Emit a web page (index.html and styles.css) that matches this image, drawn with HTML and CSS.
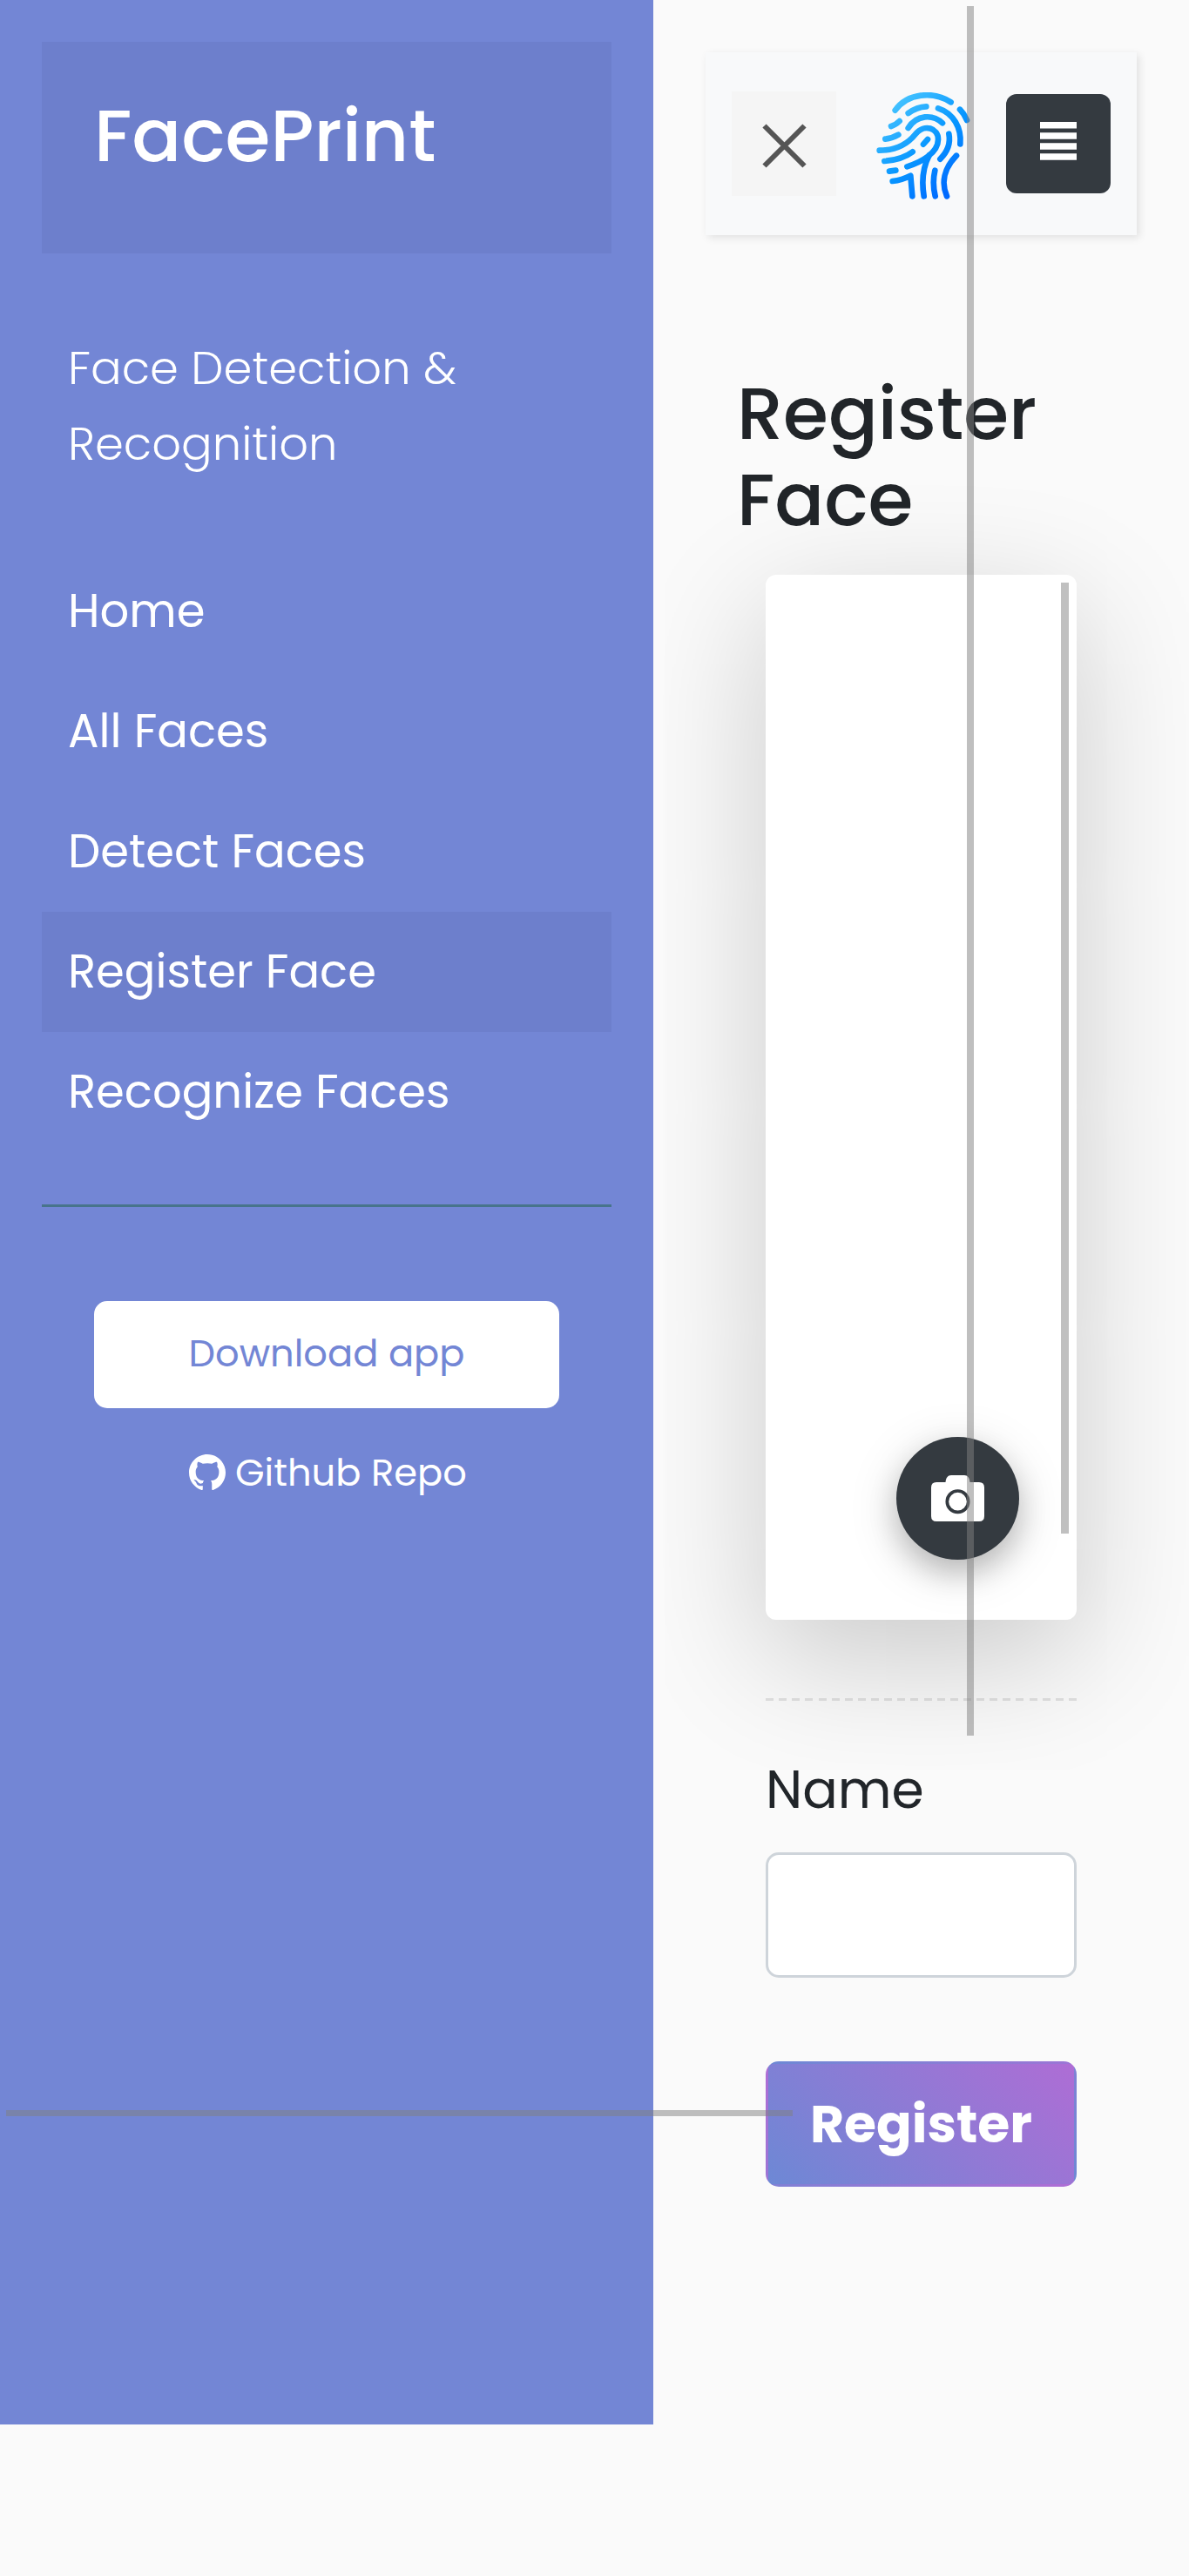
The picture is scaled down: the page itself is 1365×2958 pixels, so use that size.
FILE: index.html
```html
<!DOCTYPE html>
<html lang="en">
<head>
<meta charset="utf-8">
<title>FacePrint</title>
<link rel="stylesheet" href="styles.css">
</head>
<body>
<div class="wrapper">
  <nav class="sidebar">
    <div class="sidebar-header"><h3 class="brand">FacePrint</h3></div>
    <p class="tagline">Face Detection &amp;<br>Recognition</p>
    <ul class="menu">
      <li><a class="menu-link">Home</a></li>
      <li><a class="menu-link">All Faces</a></li>
      <li><a class="menu-link">Detect Faces</a></li>
      <li><a class="menu-link active">Register Face</a></li>
      <li><a class="menu-link">Recognize Faces</a></li>
    </ul>
    <div class="cta">
      <a class="download">Download app</a>
      <a class="github">
        <svg class="github-icon" viewBox="0 0 16 16"><path fill="#fff" d="M8 0C3.58 0 0 3.58 0 8c0 3.54 2.29 6.53 5.47 7.59.4.07.55-.17.55-.38 0-.19-.01-.82-.01-1.49-2.01.37-2.53-.49-2.69-.94-.09-.23-.48-.94-.82-1.13-.28-.15-.68-.52-.01-.53.63-.01 1.08.58 1.23.82.72 1.21 1.87.87 2.33.66.07-.52.28-.87.51-1.07-1.78-.2-3.64-.89-3.64-3.95 0-.87.31-1.59.82-2.15-.08-.2-.36-1.02.08-2.12 0 0 .67-.21 2.2.82.64-.18 1.32-.27 2-.27s1.36.09 2 .27c1.53-1.04 2.2-.82 2.2-.82.44 1.1.16 1.92.08 2.12.51.56.82 1.27.82 2.15 0 3.07-1.87 3.75-3.65 3.95.29.25.54.73.54 1.48 0 1.07-.01 1.93-.01 2.2 0 .21.15.46.55.38A8.01 8.01 0 0 0 16 8c0-4.42-3.58-8-8-8z"/></svg>
        <span>Github Repo</span>
      </a>
    </div>
  </nav>
  <main class="content">
    <header class="topbar">
      <button class="close-btn" aria-label="Close sidebar"><svg class="close-icon" viewBox="0 0 51 51"><path d="M2.5 2.5 48.5 48.5M48.5 2.5 2.5 48.5" stroke="#555" stroke-width="6"/></svg></button>
      <svg class="logo" viewBox="80 77 324 369" fill="none" stroke="url(#ink)" stroke-width="20" stroke-linecap="round" stroke-linejoin="round">
        <defs><linearGradient id="ink" gradientUnits="userSpaceOnUse" x1="130" y1="110" x2="370" y2="380"><stop offset="0" stop-color="#47c5ff"/><stop offset=".55" stop-color="#0796ff"/><stop offset="1" stop-color="#006aff"/></linearGradient></defs>
        <path d="M145 139C187 80 275 71 337 111"/>
        <path d="M190 149Q220 127 252 126"/>
        <path d="M293 132C346 149 374 200 369 255"/>
        <path d="M368 136Q383 151 392 173"/>
        <path d="M131 194Q146 190 160 176"/>
        <path d="M190 200C219 154 274 151 308 183"/>
        <path d="M111 238Q136 235 156 223"/>
        <path d="M91 277C145 277 188 255 215 221C246 183 294 201 293 240C293 286 235 318 186 333"/>
        <path d="M242 256 257 239"/>
        <path d="M330 220C337 256 324 283 300 307"/>
        <path d="M108 314C146 311 180 301 205 282"/>
        <path d="M262 294C241 334 236 385 244 435"/>
        <path d="M125 349 147 346"/>
        <path d="M136 383Q168 379 198 364L204 435"/>
        <path d="M282 346Q272 389 283 435"/>
        <path d="M356 295C313 339 303 389 323 435"/>
      </svg>
      <button class="toggle-btn" aria-label="Toggle menu"><svg class="align-icon" viewBox="0 0 42 44"><path fill="#fff" d="M0 0h42v7.5H0zM0 12.2h42v7.5H0zM0 24.2h42v7.5H0zM0 36.3h42v7.5H0z"/></svg></button>
    </header>
    <section class="register">
      <h2 class="title">Register<br>Face</h2>
      <div class="panel">
        <div class="preview">
          <div class="preview-scroll"></div>
          <button class="camera-btn" aria-label="Take photo"><svg class="camera-icon" viewBox="0 0 61 53"><path fill="#fff" d="M6 8H16.500C17 3 19 0 23 0H38C42 0 44 3 44.500 8H55Q61 8 61 14V47Q61 53 55 53H6Q0 53 0 47V14Q0 8 6 8Z"/><circle cx="30.500" cy="30.200" r="12.200" fill="none" stroke="#343a40" stroke-width="3.700"/></svg></button>
        </div>
        <div class="dashes"></div>
        <label class="label" for="name">Name</label>
        <input class="field" id="name" type="text">
        <button class="submit">Register</button>
      </div>
    </section>
  </main>
</div>
<div class="scroll-y"></div>
<div class="scroll-x"></div>
</body>
</html>
```
FILE: styles.css
```css
* { box-sizing: border-box; }
body {
  margin: 0;
  min-height: 2958px;
  background: #fafafa;
  color: #212529;
  font-family: Poppins, Inter, sans-serif;
  position: relative;
}
h2, h3, p, ul { margin: 0; padding: 0; font-weight: inherit; }
button { border: 0; padding: 0; font: inherit; }
svg { display: block; flex: none; }
.wrapper { display: flex; align-items: flex-start; }

.sidebar {
  position: relative;
  z-index: 1;
  width: 750px;
  height: 2784px;
  padding: 48px;
  background: #7386d5;
  color: #fff;
}
.sidebar-header { height: 243px; padding: 58px 60px; background: #6d7fcc; }
.brand { font-size: 84px; line-height: 100px; font-weight: 500; }
.tagline { margin-top: 88px; padding-left: 30px; font-size: 52.8px; line-height: 87px; font-weight: 300; }
.menu { margin-top: 80px; padding-bottom: 60px; border-bottom: 3px solid #47748b; list-style: none; }
.menu-link { display: block; height: 138px; padding-left: 30px; font-size: 52.8px; line-height: 138px; }
.menu-link.active { background: #6d7fcc; }
.cta { display: flex; flex-direction: column; gap: 13px; padding: 108px 60px 0; font-size: 43.2px; }
.download { height: 123px; border-radius: 15px; background: #fff; color: #7386d5; line-height: 120px; text-align: center; }
.github { display: flex; align-items: center; gap: 11px; height: 123px; padding-left: 109px; line-height: 123px; }
.github-icon { width: 42px; height: 42px; margin-bottom: 2px; }

.content { width: 615px; padding: 60px; }
.topbar {
  display: flex;
  align-items: center;
  justify-content: space-between;
  height: 210px;
  padding: 0 30px;
  background: #f8f9fa;
  box-shadow: 3px 3px 9px rgba(0, 0, 0, .1);
}
.close-btn { display: flex; align-items: center; justify-content: center; width: 120px; height: 120px; background: #f5f5f5; }
.close-icon { width: 51px; height: 51px; margin-top: 4px; }
.logo { width: 108px; height: 123px; margin: 4px 0 0 5px; }
.toggle-btn { display: flex; align-items: center; justify-content: center; width: 120px; height: 114px; border-radius: 12px; background: #343a40; }
.align-icon { width: 42px; height: 44px; margin-bottom: 6px; }

.register { padding: 155px 36px 0; }
.title { font-size: 84px; line-height: 99px; font-weight: 500; white-space: nowrap; }
.panel { display: flex; flex-direction: column; padding: 37px 33px 0; }
.preview {
  position: relative;
  height: 1200px;
  border-radius: 12px;
  background: #fff;
  box-shadow: 0 42px 150px rgba(0, 0, 0, .2);
}
.preview-scroll { position: absolute; top: 9px; right: 9px; width: 9px; height: 1092px; background: #c0c0c0; }
.camera-btn {
  position: absolute;
  right: 66px;
  bottom: 69px;
  display: flex;
  align-items: center;
  justify-content: center;
  width: 141px;
  height: 141px;
  border-radius: 50%;
  background: #343a40;
  box-shadow: 0 15px 33px rgba(0, 0, 0, .2), 0 12px 60px rgba(0, 0, 0, .14);
}
.camera-icon { width: 61px; height: 53px; }
.dashes { height: 3px; margin-top: 90px; background: repeating-linear-gradient(90deg, rgba(0, 0, 0, .1) 0 9px, transparent 9px 15.13px); }
.label { margin-top: 58px; font-size: 60px; line-height: 88px; }
.field { width: 100%; height: 144px; margin-top: 28px; border: 3px solid #ced4da; border-radius: 15px; background: #fff; }
.submit {
  height: 144px;
  margin-top: 96px;
  border: 3px solid transparent;
  border-radius: 15px;
  background: linear-gradient(45deg, #6d88d5, #ae6dd5);
  color: #fff;
  font-size: 60px;
  font-weight: 700;
}

.scroll-y, .scroll-x { position: absolute; z-index: 2; background: rgba(128, 128, 128, .5); }
.scroll-y { left: 1110px; top: 7px; width: 8px; height: 1986px; }
.scroll-x { left: 7px; top: 2423px; width: 903px; height: 7px; }
```
